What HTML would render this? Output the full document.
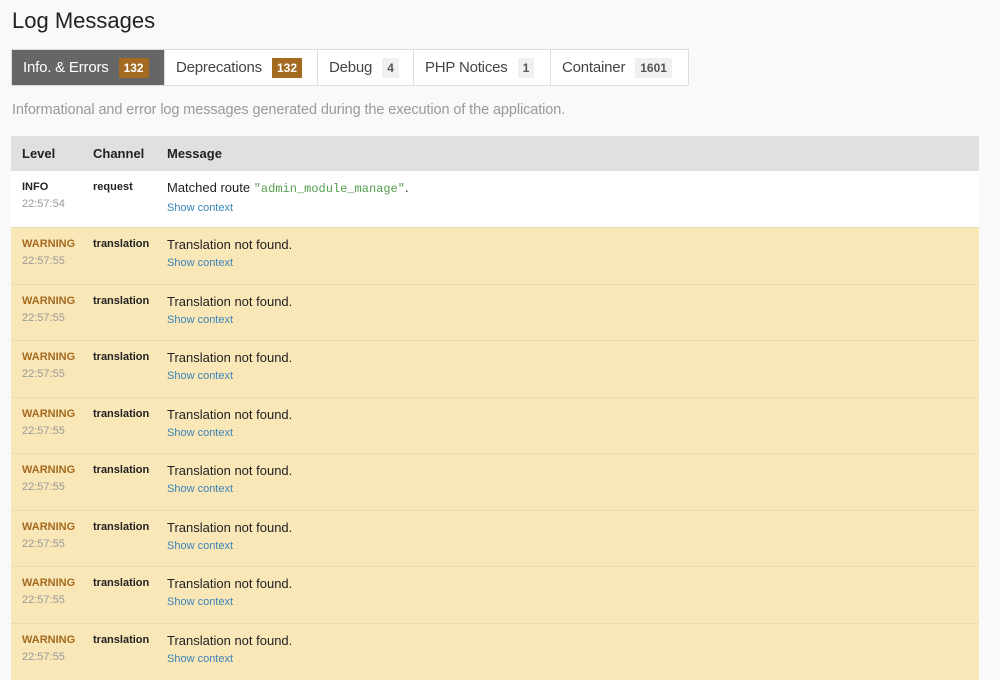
<!DOCTYPE html>
<html><head><style>
body{margin:0;background:#f9f9f9;font-family:"Liberation Sans",Arial,sans-serif;width:1000px;height:658px;overflow:hidden;color:#222}
h2{position:absolute;left:12px;top:8px;margin:0;font-size:22px;font-weight:normal;color:#222}
.tabs{position:absolute;left:11px;top:49px;display:flex;height:37px;background:#fff;border:1px solid #ddd;box-sizing:border-box}
.tab{display:flex;align-items:center;padding:0 11px;font-size:15px;color:#444;border-right:1px solid #ddd;box-sizing:border-box;white-space:nowrap;letter-spacing:-0.2px}
.tab:last-child{border-right:0}
.tab.act{background:#666;color:#fff}
.b{margin-left:10px;font-size:12px;font-weight:bold;padding:3px 5px;background:#f0f0f0;color:#555;letter-spacing:0}
.b.o{background:#a46a1f;color:#fff}
.desc{position:absolute;left:12px;top:102px;font-size:14.5px;color:#999;letter-spacing:-0.1px}
table{position:absolute;left:11px;top:136px;width:968px;border-collapse:collapse;font-size:13px}
th{background:#e0e0e0;text-align:left;height:35px;padding:0 0 0 11px;font-size:13px;color:#222}
td{vertical-align:top;padding:9px 0 0 11px;border-top:1px solid #e8dcb0}
tr.r{height:56.5px}
tr.w td{background:#f9e7b8}
tr.i td{background:#fff;border-top:0}
.lv{font-size:11px;font-weight:bold;color:#a46a1f;line-height:15px}
tr.i .lv{color:#222}
.tm{font-size:11px;color:#999;font-weight:normal;display:block;margin-top:2px}
.ch{font-size:11px;font-weight:bold;line-height:15px}
.msg{font-size:13px;line-height:17px;color:#222;margin-top:-1px}
.sc{font-size:11px;color:#3983b8;display:block;margin-top:4px}
code{font-family:"Liberation Mono",monospace;color:#529e4c;font-size:12px}
</style></head><body>
<h2>Log Messages</h2>
<div class="tabs">
<div class="tab act" style="width:153px">Info. &amp; Errors <span class="b o">132</span></div>
<div class="tab" style="width:153px">Deprecations <span class="b o">132</span></div>
<div class="tab" style="width:96px">Debug <span class="b">4</span></div>
<div class="tab" style="width:137px">PHP Notices <span class="b">1</span></div>
<div class="tab" style="width:137px">Container <span class="b">1601</span></div>
</div>
<div class="desc">Informational and error log messages generated during the execution of the application.</div>
<table>
<tr><th style="width:60px">Level</th><th style="width:63px">Channel</th><th>Message</th></tr>
<tr class="i r"><td><div class="lv">INFO<span class="tm">22:57:54</span></div></td><td><div class="ch">request</div></td><td><div class="msg">Matched route <code>"admin_module_manage"</code>.</div><span class="sc">Show context</span></td></tr>
<tr class="w r"><td><div class="lv">WARNING<span class="tm">22:57:55</span></div></td><td><div class="ch">translation</div></td><td><div class="msg">Translation not found.</div><span class="sc">Show context</span></td></tr>
<tr class="w r"><td><div class="lv">WARNING<span class="tm">22:57:55</span></div></td><td><div class="ch">translation</div></td><td><div class="msg">Translation not found.</div><span class="sc">Show context</span></td></tr>
<tr class="w r"><td><div class="lv">WARNING<span class="tm">22:57:55</span></div></td><td><div class="ch">translation</div></td><td><div class="msg">Translation not found.</div><span class="sc">Show context</span></td></tr>
<tr class="w r"><td><div class="lv">WARNING<span class="tm">22:57:55</span></div></td><td><div class="ch">translation</div></td><td><div class="msg">Translation not found.</div><span class="sc">Show context</span></td></tr>
<tr class="w r"><td><div class="lv">WARNING<span class="tm">22:57:55</span></div></td><td><div class="ch">translation</div></td><td><div class="msg">Translation not found.</div><span class="sc">Show context</span></td></tr>
<tr class="w r"><td><div class="lv">WARNING<span class="tm">22:57:55</span></div></td><td><div class="ch">translation</div></td><td><div class="msg">Translation not found.</div><span class="sc">Show context</span></td></tr>
<tr class="w r"><td><div class="lv">WARNING<span class="tm">22:57:55</span></div></td><td><div class="ch">translation</div></td><td><div class="msg">Translation not found.</div><span class="sc">Show context</span></td></tr>
<tr class="w r"><td><div class="lv">WARNING<span class="tm">22:57:55</span></div></td><td><div class="ch">translation</div></td><td><div class="msg">Translation not found.</div><span class="sc">Show context</span></td></tr>
</table>
</body></html>
